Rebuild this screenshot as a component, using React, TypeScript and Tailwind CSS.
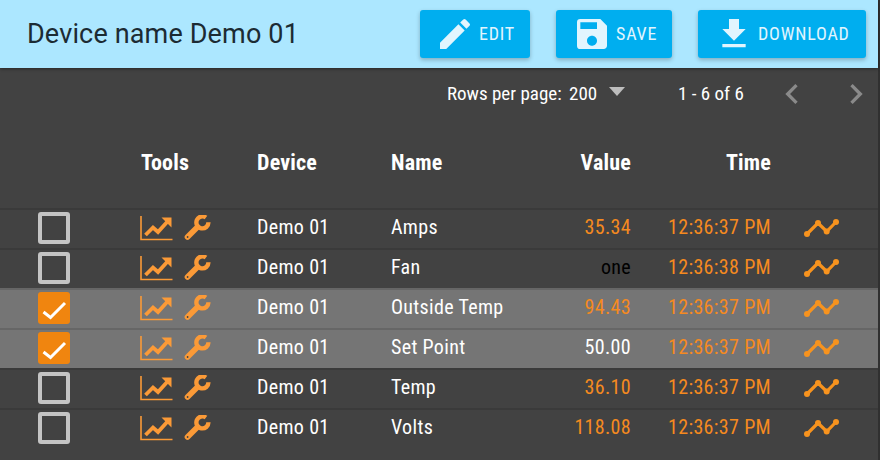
import { MdEdit, MdSave, MdFileDownload, MdChevronLeft, MdChevronRight } from "react-icons/md";

const rows = [
  { name: "Amps", value: "35.34", time: "12:36:37 PM", color: "text-[#f58a1f]", checked: false },
  { name: "Fan", value: "one", time: "12:36:38 PM", color: "text-black", checked: false },
  { name: "Outside Temp", value: "94.43", time: "12:36:37 PM", color: "text-[#f58a1f]", checked: true },
  { name: "Set Point", value: "50.00", time: "12:36:37 PM", color: "text-white", checked: true },
  { name: "Temp", value: "36.10", time: "12:36:37 PM", color: "text-[#f58a1f]", checked: false },
  { name: "Volts", value: "118.08", time: "12:36:37 PM", color: "text-[#f58a1f]", checked: false },
];

function ChartIcon() {
  return (
    <svg width="33" height="25" viewBox="0 0 33 25" fill="none" className="text-[#fb9a37]">
      <path d="M1 0V23.5H32.5" stroke="currentColor" strokeWidth="1.6" />
      <path d="M5.5 19L13 11.5L18 16L28 5" stroke="currentColor" strokeWidth="3.8" />
      <path d="M21.5 1.5H31.5V11.5Z" fill="currentColor" />
    </svg>
  );
}

function WrenchIcon() {
  return (
    <svg width="27" height="26" viewBox="0 0 27 26" fill="none" className="text-[#fb9a37]">
      <path d="M3.5 22L13.5 12" stroke="currentColor" strokeWidth="5.6" strokeLinecap="round" />
      <path d="M22 2.6A6 6 0 1 0 24.4 7.2" stroke="currentColor" strokeWidth="4.4" />
      <circle cx="3.6" cy="22" r="0.9" fill="#424242" />
    </svg>
  );
}

function TrendIcon() {
  return (
    <svg width="36" height="20" viewBox="0 0 36 20" fill="none" className="text-[#f7931e]">
      <path d="M3 16L14 5L22.7 13.5L32 4" stroke="currentColor" strokeWidth="3.2" />
      <circle cx="3" cy="16" r="3" fill="currentColor" />
      <circle cx="14" cy="5" r="3" fill="currentColor" />
      <circle cx="22.7" cy="13.5" r="3" fill="currentColor" />
      <circle cx="32" cy="4" r="3" fill="currentColor" />
    </svg>
  );
}

function HeaderButton({ icon, label, width }: { icon: React.ReactNode; label: string; width: string }) {
  return (
    <button className={`flex h-12 ${width} items-center gap-1 rounded-[3px] bg-[#00aeef] pl-4 text-lg tracking-[0.8px] text-[#e1f5fe] shadow-[0_2px_4px_rgba(0,0,0,0.25)]`}>
      {icon}
      <span>{label}</span>
    </button>
  );
}

export default function App() {
  return (
    <div className="h-[460px] w-[880px] overflow-hidden bg-[#303030] [font-family:'Roboto_Condensed','Liberation_Sans_Narrow',Roboto,sans-serif] text-[20px] tracking-[0.33px] text-white">
      <div className="h-full w-[878px] bg-[#424242]">
        <header className="relative z-10 flex h-[68px] items-center bg-[#ace7ff] pl-[27px] pr-3 shadow-[0_1px_3px_rgba(0,0,0,0.4)]">
          <h1 className="flex-1 [font-family:Roboto,sans-serif] text-[27px] font-normal tracking-[0.15px] text-[#1c2b33]">Device name Demo 01</h1>
          <div className="flex gap-[26px]">
            <HeaderButton width="w-[110px]" icon={<MdEdit size={40} className="-ml-px" />} label="EDIT" />
            <HeaderButton width="w-[116px]" icon={<MdSave size={40} />} label="SAVE" />
            <HeaderButton width="w-[168px]" icon={<MdFileDownload size={40} />} label="DOWNLOAD" />
          </div>
        </header>

        <div className="flex h-[52px] items-center pl-[447px] text-[19px] tracking-normal">
          <span className="w-[122px]">Rows per page:</span>
          <span className="w-10">200</span>
          <span className="mb-1.5 h-0 w-0 border-x-8 border-t-[9px] border-x-transparent border-t-[#bdbdbd]" />
          <span className="ml-[53px] w-[94px]">1 - 6 of 6</span>
          <MdChevronLeft size={40} className="text-[#8a8a8a]" />
          <MdChevronRight size={40} className="ml-6 text-[#8a8a8a]" />
        </div>

        <div className="flex h-[88px] items-center pb-[4px] text-[22px] font-bold tracking-[0.2px]">
          <span className="w-[141px]" />
          <span className="w-[116px]">Tools</span>
          <span className="w-[134px]">Device</span>
          <span className="w-[170px]">Name</span>
          <span className="w-[70px] text-right">Value</span>
          <span className="w-[140px] text-right">Time</span>
        </div>

        {rows.map((row) => (
          <div
            key={row.name}
            className={`flex h-10 items-center border-t-2 pb-[2px] ${row.checked ? "border-[#666] bg-[#757575]" : "border-[#3a3a3a]"}`}
          >
            <div className="flex w-[108px] justify-center">
              {row.checked ? (
                <span className="flex h-8 w-8 items-center justify-center rounded-[3px] bg-[#f0850f]">
                  <svg width="32" height="32" viewBox="0 0 32 32" fill="none">
                    <path d="M5.5 20L12.5 25.5L27 11" stroke="white" strokeWidth="3" />
                  </svg>
                </span>
              ) : (
                <span className="h-8 w-8 rounded-[3px] border-4 border-[#c4c4c4]" />
              )}
            </div>
            <div className="flex w-[149px] items-center gap-[11px] pl-8">
              <ChartIcon />
              <WrenchIcon />
            </div>
            <span className="mb-0.5 w-[134px]">Demo 01</span>
            <span className="mb-0.5 w-[170px]">{row.name}</span>
            <span className={`mb-0.5 w-[70px] text-right ${row.color}`}>{row.value}</span>
            <span className="mb-0.5 w-[140px] text-right text-[#f58a1f]">{row.time}</span>
            <span className="ml-[33px]"><TrendIcon /></span>
          </div>
        ))}
      </div>
    </div>
  );
}
